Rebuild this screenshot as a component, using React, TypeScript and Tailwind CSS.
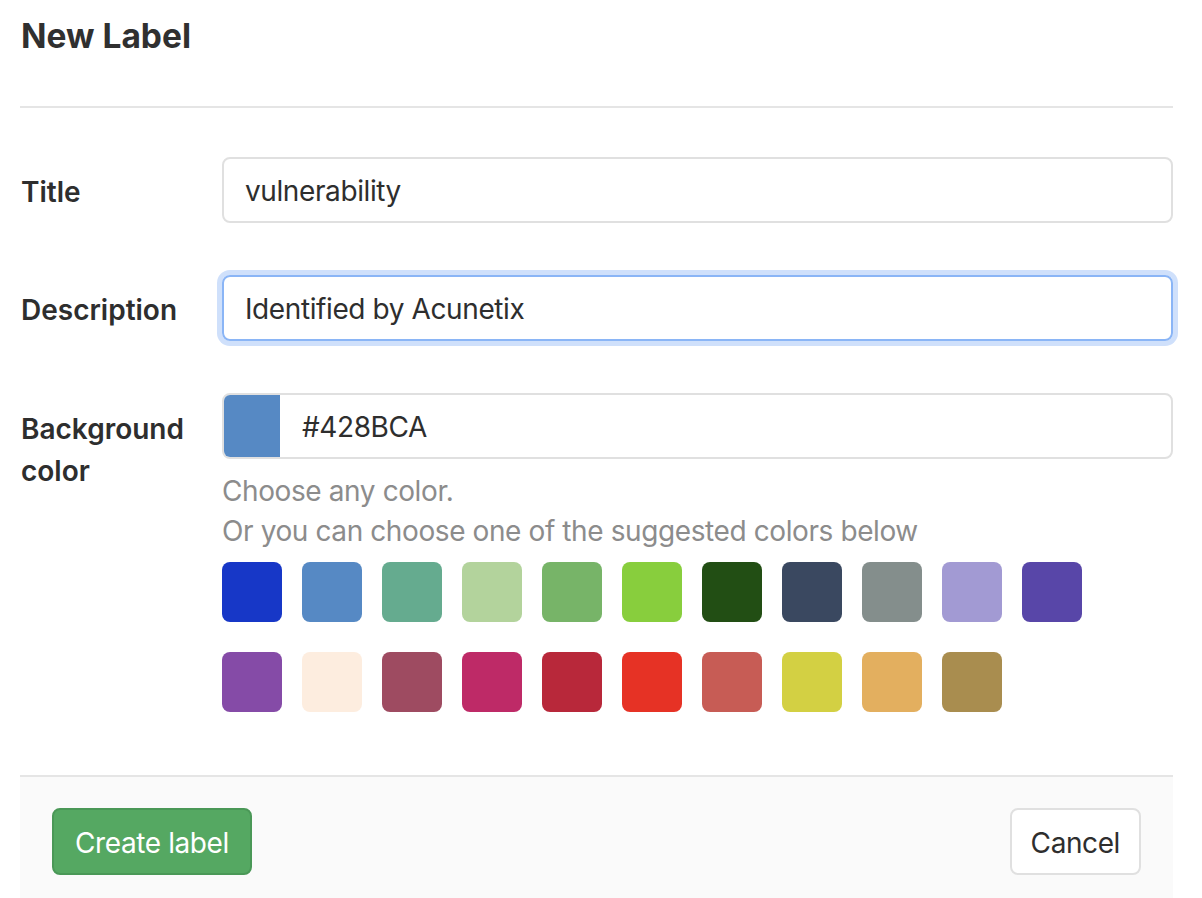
const rowOne = [
  '#1737c7',
  '#5689c4',
  '#65ab8f',
  '#b3d39c',
  '#77b468',
  '#88ce3d',
  '#224e14',
  '#3a4860',
  '#848e8c',
  '#a29ad3',
  '#5846a8',
];

const rowTwo = [
  '#854ba7',
  '#fdeddf',
  '#9e4b61',
  '#be2a67',
  '#b8283a',
  '#e63225',
  '#c75c55',
  '#d3d043',
  '#e3af5f',
  '#a98d4f',
];

const Swatch = ({ color }: { color: string }) => (
  <button
    type="button"
    className="h-[60px] w-[60px] rounded-[8px]"
    style={{ backgroundColor: color }}
  />
);

const App = () => {
  return (
    <div
      className="min-h-[898px] bg-white pl-[20px] pr-[29px] text-[28px] text-[#2e2e2e]"
      style={{ fontFamily: 'Inter, "Noto Sans", sans-serif' }}
    >
      {/* Header */}
      <div className="h-[108px] border-b-2 border-[#e5e5e5] pt-[14px]">
        <h3 className="pl-[1px] text-[33.5px] font-bold leading-[44px] text-[#303030]">New Label</h3>
      </div>

      {/* Form */}
      <div className="pt-[49px]">
        <div className="flex">
          <label className="w-[202px] pl-[1px] pt-[14px] font-semibold leading-[42px]">Title</label>
          <div className="flex h-[66px] flex-1 items-center rounded-[8px] border-2 border-[#e0e0e0] pl-[21px] pt-[2px] tracking-[-0.4px]">
            vulnerability
          </div>
        </div>

        <div className="mt-[52px] flex">
          <label className="w-[202px] pl-[1px] pt-[14px] font-semibold leading-[42px]">Description</label>
          <div className="flex h-[66px] flex-1 items-center rounded-[8px] border-2 border-[#8ab5f6] pl-[21px] pt-[2px] tracking-[-0.4px] shadow-[0_0_0_5px_#cfe0fb]">
            Identified by Acunetix
          </div>
        </div>

        <div className="mt-[52px] flex">
          <label className="w-[202px] pl-[1px] pr-[20px] pt-[15px] font-semibold leading-[42px]">
            Background color
          </label>
          <div className="flex-1 tracking-[-0.4px]">
            <div className="flex h-[66px] items-center overflow-hidden rounded-[8px] border-2 border-[#e0e0e0]">
              <div className="h-full w-[56px] bg-[#5689c4]" />
              <span className="pl-[22px] pt-[2px]">#428BCA</span>
            </div>
            <p className="mt-[12px] leading-[40px] text-[#8c8c8c]">Choose any color.</p>
            <p className="leading-[41px] text-[#8c8c8c]">Or you can choose one of the suggested colors below</p>
            <div className="mt-[10px] flex gap-[20px]">
              {rowOne.map((c) => (
                <Swatch key={c} color={c} />
              ))}
            </div>
            <div className="mt-[30px] flex gap-[20px]">
              {rowTwo.map((c) => (
                <Swatch key={c} color={c} />
              ))}
            </div>
          </div>
        </div>
      </div>

      {/* Footer */}
      <div className="mt-[63px] flex h-[124px] items-start justify-between border-t-2 border-[#e5e5e5] bg-[#fafafa] pl-[32px] pr-[32px] pt-[31px] tracking-[-0.4px]">
        <button
          type="button"
          className="h-[67px] rounded-[8px] border-2 border-[#4a9857] bg-[#55a862] px-[21px] pt-[2px] text-white"
        >
          Create label
        </button>
        <button
          type="button"
          className="h-[67px] rounded-[8px] border-2 border-[#e0e0e0] bg-white px-[19px] pt-[2px] text-[#2e2e2e]"
        >
          Cancel
        </button>
      </div>
    </div>
  );
};

export default App;
